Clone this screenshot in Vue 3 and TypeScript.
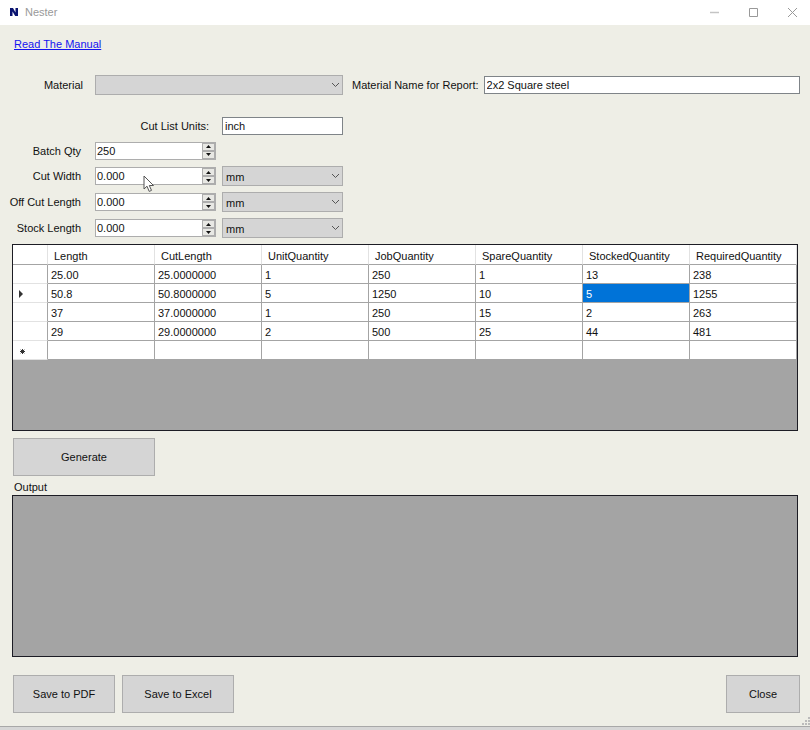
<script setup lang="ts">
import { reactive, ref } from 'vue'

interface Measure {
  id: string
  label: string
  value: string
  step: number
  decimals: number
  unit: string | null
}

interface CutRow {
  cells: string[]
  marker: '' | 'current' | 'new'
}

const units = ['mm', 'inch']

const material = ref('')
const reportName = ref('2x2 Square steel')
const cutListUnits = ref('inch')

const measures = reactive<Measure[]>([
  { id: 'batch-qty', label: 'Batch Qty', value: '250', step: 1, decimals: 0, unit: null },
  { id: 'cut-width', label: 'Cut Width', value: '0.000', step: 1, decimals: 3, unit: 'mm' },
  { id: 'off-cut-length', label: 'Off Cut Length', value: '0.000', step: 1, decimals: 3, unit: 'mm' },
  { id: 'stock-length', label: 'Stock Length', value: '0.000', step: 1, decimals: 3, unit: 'mm' },
])

const columns = [
  'Length',
  'CutLength',
  'UnitQuantity',
  'JobQuantity',
  'SpareQuantity',
  'StockedQuantity',
  'RequiredQuantity',
]

const rows: CutRow[] = [
  { marker: '', cells: ['25.00', '25.0000000', '1', '250', '1', '13', '238'] },
  { marker: 'current', cells: ['50.8', '50.8000000', '5', '1250', '10', '5', '1255'] },
  { marker: '', cells: ['37', '37.0000000', '1', '250', '15', '2', '263'] },
  { marker: '', cells: ['29', '29.0000000', '2', '500', '25', '44', '481'] },
  { marker: 'new', cells: ['', '', '', '', '', '', ''] },
]

const selected = ref({ row: 1, column: 5 })

function nudge(m: Measure, direction: number) {
  const next = Math.max(0, Number(m.value) + direction * m.step)
  m.value = next.toFixed(m.decimals)
}
</script>

<template>
  <div class="window">
    <header class="titlebar">
      <svg class="app-icon" viewBox="0 0 12 12" aria-hidden="true">
        <path d="M2 2h3l2.500 4.500V2H10v8H7.200L4.500 5.500V10H2z" fill="#0a1470" />
      </svg>
      <h1 class="title">Nester</h1>
      <div class="window-buttons">
        <button type="button" aria-label="Minimize">
          <svg viewBox="0 0 11 11"><path d="M1 5.500h9" stroke="#c4c4c4" stroke-width="1.500" /></svg>
        </button>
        <button type="button" aria-label="Maximize">
          <svg viewBox="0 0 11 11"><path d="M1.500 1.500h8v8h-8z" stroke="#999" fill="none" /></svg>
        </button>
        <button type="button" aria-label="Close window">
          <svg viewBox="0 0 11 11"><path d="M1 1l9 9M10 1l-9 9" stroke="#999" fill="none" /></svg>
        </button>
      </div>
    </header>

    <main class="content">
      <div class="link-row"><a href="#manual">Read The Manual</a></div>

      <div class="material-row">
        <label class="field-label" for="material">Material</label>
        <span class="combo material-combo">
          <select id="material" v-model="material">
            <option value=""></option>
          </select>
          <svg class="chevron" viewBox="0 0 9 6" aria-hidden="true"><path d="M1 1l3.500 3.500L8 1" /></svg>
        </span>
        <label class="report-label" for="report-name">Material Name for Report:</label>
        <input id="report-name" v-model="reportName" class="textbox report-box" type="text" />
      </div>

      <div class="measures">
        <label class="units-label" for="cut-list-units">Cut List Units:</label>
        <input id="cut-list-units" v-model="cutListUnits" class="textbox units-box" type="text" />

        <template v-for="m in measures" :key="m.id">
          <label class="field-label" :for="m.id">{{ m.label }}</label>
          <span class="spinner">
            <input :id="m.id" v-model="m.value" type="text" inputmode="decimal" />
            <span class="arrows">
              <button type="button" :aria-label="`Increase ${m.label}`" @click="nudge(m, 1)">
                <svg viewBox="0 0 5 3"><path d="M0 3h5L2.500 0z" /></svg>
              </button>
              <button type="button" :aria-label="`Decrease ${m.label}`" @click="nudge(m, -1)">
                <svg viewBox="0 0 5 3"><path d="M0 0h5L2.500 3z" /></svg>
              </button>
            </span>
            <svg v-if="m.id === 'cut-width'" class="pointer" viewBox="0 0 12 18" aria-hidden="true">
              <path
                d="M1 1v13l3-2.800 2.200 5.200 2.300-1-2.200-4.900h4.200z"
                fill="#fff"
                stroke="#555"
                stroke-linejoin="round"
              />
            </svg>
          </span>
          <span v-if="m.unit !== null" class="combo">
            <select v-model="m.unit" :aria-label="`${m.label} unit`">
              <option v-for="u in units" :key="u" :value="u">{{ u }}</option>
            </select>
            <svg class="chevron" viewBox="0 0 9 6" aria-hidden="true"><path d="M1 1l3.500 3.500L8 1" /></svg>
          </span>
        </template>
      </div>

      <div class="grid-panel">
        <table>
          <colgroup>
            <col class="marker-col" />
            <col v-for="c in columns" :key="c" />
          </colgroup>
          <thead>
            <tr>
              <th class="marker"></th>
              <th v-for="c in columns" :key="c" scope="col">{{ c }}</th>
            </tr>
          </thead>
          <tbody>
            <tr v-for="(row, r) in rows" :key="r">
              <td class="marker">
                <svg v-if="row.marker === 'current'" viewBox="0 0 8 8"><path d="M1 0l4 4-4 4z" fill="#333" /></svg>
                <svg v-else-if="row.marker === 'new'" viewBox="0 0 8 8">
                  <path d="M4.500 2v5M2 4.500h5M2.700 2.700l3.600 3.600M6.300 2.700L2.700 6.300" stroke="#333" />
                </svg>
              </td>
              <td
                v-for="(cell, c) in row.cells"
                :key="c"
                :class="{ selected: selected.row === r && selected.column === c }"
                @click="selected = { row: r, column: c }"
              >
                {{ cell }}
              </td>
            </tr>
          </tbody>
        </table>
      </div>

      <div class="generate-row">
        <button type="button" class="button generate">Generate</button>
      </div>

      <h2 id="output-heading" class="output-heading">Output</h2>
      <section class="output-panel" aria-labelledby="output-heading"></section>

      <div class="actions">
        <div class="save-actions">
          <button type="button" class="button save-pdf">Save to PDF</button>
          <button type="button" class="button save-excel">Save to Excel</button>
        </div>
        <button type="button" class="button close">Close</button>
      </div>

      <svg class="grip" viewBox="0 0 8 8" aria-hidden="true">
        <path d="M6 0h2v2H6zM3 3h2v2H3zM6 3h2v2H6zM0 6h2v2H0zM3 6h2v2H3zM6 6h2v2H6z" fill="#bbb" />
      </svg>
    </main>
  </div>
</template>

<style>
body {
  margin: 0;
  background: #d6d6d6;
}
</style>

<style scoped>
.window,
.window * {
  box-sizing: border-box;
}

.window {
  display: flex;
  flex-direction: column;
  min-height: 100vh;
  padding-bottom: 3px;
  font-family: 'Liberation Sans', Arial, sans-serif;
  font-size: 11px;
  line-height: 14px;
  color: #111;
}

button,
input,
select {
  margin: 0;
  border-radius: 0;
  font: inherit;
  color: inherit;
}

label {
  white-space: nowrap;
}

svg {
  display: block;
}

.titlebar {
  display: flex;
  align-items: center;
  height: 25px;
  padding: 0 0 1px 8px;
  background: #fff;
}

.app-icon {
  width: 12px;
  height: 12px;
}

.title {
  margin: 0 auto 0 5px;
  font-size: 11px;
  font-weight: 400;
  color: #999;
}

.window-buttons {
  display: flex;
}

.window-buttons button {
  display: grid;
  place-items: center;
  width: 39px;
  height: 24px;
  padding: 0 0 0 4px;
  border: 0;
  background: none;
}

.window-buttons svg {
  width: 11px;
  height: 11px;
}

.content {
  position: relative;
  display: flex;
  flex: 1;
  flex-direction: column;
  padding: 12px 10px 13px 12px;
  background: #eeeee6;
  border-bottom: 1px solid #a8a8a8;
}

.link-row {
  padding-left: 2px;
}

.link-row a {
  color: #1414f0;
}

.material-row {
  display: flex;
  align-items: center;
  margin-top: 24px;
}

.field-label {
  width: 71px;
  text-align: right;
}

.material-combo {
  width: 248px;
  margin-left: 12px;
}

.report-label {
  margin: 0 5px 0 9px;
}

.textbox {
  height: 18px;
  min-width: 0;
  padding: 0 2px;
  border: 1px solid #7f8488;
  background: #fff;
}

.report-box {
  flex: 1;
}

.combo {
  position: relative;
  height: 20px;
}

.combo select {
  width: 100%;
  height: 100%;
  padding: 1px 14px 0 3px;
  appearance: none;
  border: 1px solid #adadad;
  background: #d5d5d5;
}

.chevron {
  position: absolute;
  top: 7px;
  right: 3px;
  width: 9px;
  height: 6px;
  fill: none;
  stroke: #555;
  pointer-events: none;
}

.measures {
  display: grid;
  grid-template-columns: 83px 121px 121px;
  grid-template-rows: 25px 25px 26px 26px 26px;
  column-gap: 6px;
  align-items: center;
  margin: 18px 0 0 -6px;
}

.measures .field-label {
  grid-column: 1;
  width: auto;
  padding-right: 8px;
}

.measures .spinner,
.measures .units-label {
  grid-column: 2;
}

.measures .combo,
.measures .units-box {
  grid-column: 3;
}

.measures .units-label {
  padding-right: 7px;
  text-align: right;
}

.spinner {
  position: relative;
  display: flex;
  height: 18px;
  border: 1px solid #adadad;
  background: #fff;
}

.spinner input {
  flex: 1;
  min-width: 0;
  padding: 0 1px;
  border: 0;
  background: none;
}

.arrows {
  display: flex;
  flex-direction: column;
  width: 13px;
}

.arrows button {
  display: grid;
  flex: 1;
  place-items: center;
  min-height: 0;
  padding: 0;
  border: 1px solid #adadad;
  background: #e8e8e4;
}

.arrows svg {
  width: 5px;
  height: 3px;
  fill: #111;
}

.pointer {
  position: absolute;
  top: 7px;
  left: 47px;
  width: 12px;
  height: 18px;
}

.grid-panel {
  height: 187px;
  margin: 3px 2px 0 0;
  border: 1px solid #1c1c24;
  background: #a4a4a4;
}

table {
  width: 100%;
  table-layout: fixed;
  border-spacing: 0;
}

.marker-col {
  width: 35px;
}

th,
td {
  height: 19px;
  padding: 1px 3px 0;
  overflow: hidden;
  font-weight: 400;
  line-height: 14px;
  text-align: left;
  white-space: nowrap;
  border-right: 1px solid #a4a4a4;
  border-bottom: 1px solid #a4a4a4;
  background: #fff;
}

th {
  height: 20px;
  padding: 2px 6px 0;
  border-right-color: #e2e2e2;
}

td.marker {
  padding: 1px 5px 0;
  border-bottom-color: #e2e2e2;
}

.marker svg {
  width: 8px;
  height: 8px;
}

td.selected {
  color: #fff;
  background: #0073d8;
}

.button {
  height: 38px;
  padding: 0;
  border: 1px solid #adadad;
  background: #d5d5d5;
}

.generate-row {
  margin: 7px 0 0 1px;
}

.generate {
  display: block;
  width: 142px;
}

.output-heading {
  margin: 4px 0 1px 2px;
  font-size: 11px;
  font-weight: 400;
}

.output-panel {
  flex: 1;
  min-height: 120px;
  margin-right: 2px;
  border: 1px solid #1c1c24;
  background: #a4a4a4;
}

.actions {
  display: flex;
  justify-content: space-between;
  margin: 18px 0 0 1px;
}

.save-actions {
  display: flex;
  gap: 7px;
}

.save-pdf {
  width: 102px;
}

.save-excel {
  width: 112px;
}

.close {
  width: 74px;
}

.grip {
  position: absolute;
  right: 0;
  bottom: 1px;
  width: 8px;
  height: 8px;
}
</style>
